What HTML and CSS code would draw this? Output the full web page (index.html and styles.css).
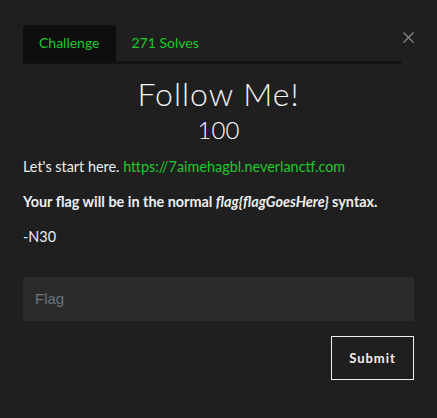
FILE: index.html
```html
<!DOCTYPE html>
<html>
<head>
<meta charset="utf-8">
<link rel="stylesheet" href="styles.css">
</head>
<body>
<div class="modal">
  <div class="header">
    <div class="tabs">
      <div class="tab active">Challenge</div>
      <div class="tab">271 Solves</div>
    </div>
    <div class="close">
      <svg width="11" height="11" viewBox="0 0 11 11"><path d="M0.5 0.5L10.5 10.5M10.5 0.5L0.5 10.5" stroke="#8a8a8a" stroke-width="1.2"/></svg>
    </div>
  </div>
  <h1 class="title">Follow Me!</h1>
  <div class="value">100</div>
  <p class="line">Let's start here. <a class="link">https://7aimehagbl.neverlanctf.com</a></p>
  <p class="line strong">Your flag will be in the normal <em>flag{flagGoesHere}</em> syntax.</p>
  <p class="line">-N30</p>
  <div class="input">Flag</div>
  <div class="actions">
    <div class="btn">Submit</div>
  </div>
</div>
</body>
</html>
```
FILE: styles.css
```css
html, body {
  margin: 0;
  padding: 0;
  background: #1f1f1f;
}
body {
  font-family: Lato, "Liberation Sans", sans-serif;
  color: #eeeeee;
}
.modal {
  padding: 25px 23px 0 23px;
}
.header {
  display: flex;
  align-items: flex-start;
}
.tabs {
  flex: 1;
  display: flex;
  border-bottom: 3px solid #111111;
}
.tab {
  height: 36px;
  line-height: 36px;
  padding: 0 16px;
  font-size: 14px;
  color: #1ec82c;
}
.tab.active {
  background: #0e0e0e;
  border-radius: 4px 4px 0 0;
}
.close {
  width: 13px;
  padding-top: 7px;
  padding-left: 2px;
  box-sizing: border-box;
  display: flex;
}
.title {
  margin: 12px 0 0 0;
  text-align: center;
  font-weight: 300;
  font-size: 32px;
  line-height: 36px;
  letter-spacing: 1px;
  color: #f4f4f4;
}
.value {
  margin-top: 3px;
  text-align: center;
  font-size: 24px;
  font-weight: 300;
  line-height: 30px;
  color: #ffffff;
}
.line {
  margin: 10px 0 0 0;
  font-size: 14.4px;
  line-height: 24px;
}
.line + .line {
  margin-top: 11px;
}
.strong {
  font-weight: bold;
}
.link {
  color: #1ec82c;
}
.input {
  margin-top: 28px;
  height: 44px;
  line-height: 44px;
  background: #2a2a2a;
  padding: 0 12px;
  font-family: "Liberation Sans", Arial, sans-serif;
  font-size: 15px;
  color: #6c737a;
}
.actions {
  display: flex;
  justify-content: flex-end;
  margin-top: 15px;
}
.btn {
  width: 81px;
  height: 42px;
  line-height: 42px;
  border: 1px solid #f0f0f0;
  text-align: center;
  font-weight: bold;
  font-size: 13px;
  letter-spacing: 1px;
  color: #eeeeee;
}
```
